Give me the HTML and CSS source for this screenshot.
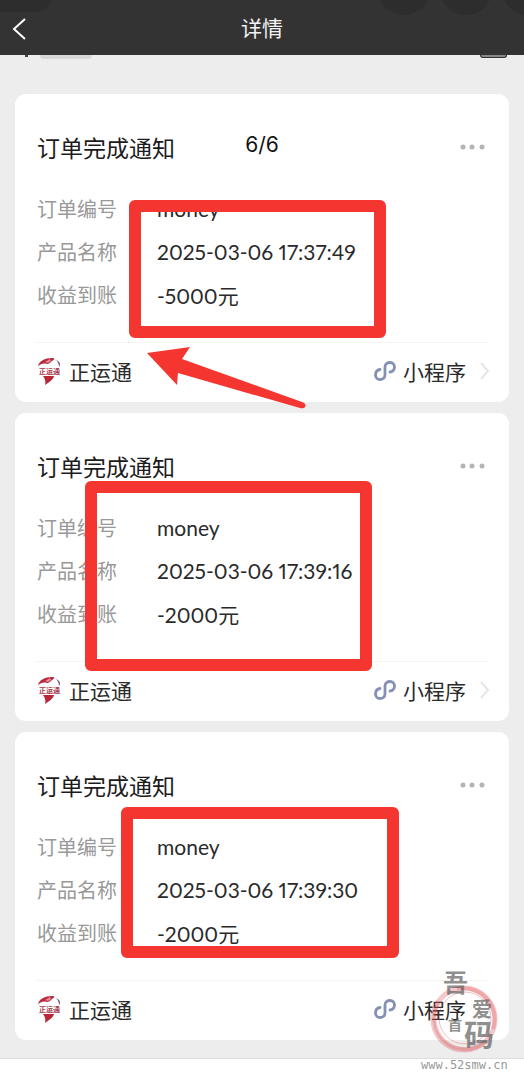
FILE: index.html
```
<!DOCTYPE html>
<html lang="zh-CN">
<head>
  <meta charset="UTF-8" />
  <meta name="viewport" content="width=device-width, initial-scale=1.0"/>
  <title>详情</title>
  <link rel="stylesheet" href="styles.css">
</head>
<body>

  <!-- shared icons -->
  <svg class="sprite" aria-hidden="true">
    <symbol id="logo" viewBox="0 0 24 28">
      <path d="M1 9C2 4 8 1 15 1c3 0 3 1 0 3-2 2-3 3-5 3-4-1-6 0-9 2z" fill="#b8293f"/>
      <path d="M8 5l5-3 1 2-3 2z" fill="#e58a92"/>
      <path d="M19 3c4 2 5 4 3 7 0-3-1-5-3-7z" fill="#6d5470"/>
      <path d="M6 19h11c-1 4-5 6-9 9 1-4 0-6-2-9z" fill="#bb2538"/>
      <text x="2" y="17" class="logo-text">正运通</text>
    </symbol>
    <symbol id="mini" viewBox="0 0 22 22">
      <path d="M6 9.500C3 10 1.500 12.500 1.500 15c0 2.500 2 4.500 4.500 4.500s5-1.500 5-4.500V7c0-3 2.500-4.500 5-4.500S20.500 4.500 20.500 7c0 2.500-1.500 4.500-4.500 5" fill="none" stroke="#8490b4" stroke-width="2.800" stroke-linecap="round"/>
    </symbol>
    <symbol id="arrow-right" viewBox="0 0 10 18">
      <path d="M1 1l7 8-7 8" fill="none" stroke="#e6e6e6" stroke-width="2"/>
    </symbol>
    <symbol id="dots" viewBox="0 0 26 6">
      <g fill="#b4b4b4"><circle cx="3" cy="3" r="2.500"/><circle cx="12" cy="3" r="2.500"/><circle cx="22" cy="3" r="2.500"/></g>
    </symbol>
  </svg>

  <header class="navbar">
    <span class="status-pill"></span>
    <span class="status-dots"><i></i><i></i><i></i></span>
    <button class="back" aria-label="返回">
      <svg width="14" height="22" viewBox="0 0 14 22"><path d="M13 1L2 11l11 10" fill="none" stroke="#fff" stroke-width="2"/></svg>
    </button>
    <h1>详情</h1>
  </header>

  <main class="list">
    <span class="peek peek-dot"></span>
    <span class="peek peek-name"></span>
    <span class="peek peek-box"></span>

    <article class="card">
      <div class="card-head">
        <h2>订单完成通知</h2>
        <button class="more" aria-label="更多"><svg width="26" height="6"><use href="#dots"/></svg></button>
      </div>
      <dl>
        <div class="row"><dt>订单编号</dt><dd>money</dd></div>
        <div class="row"><dt>产品名称</dt><dd>2025-03-06 17:37:49</dd></div>
        <div class="row"><dt>收益到账</dt><dd>-5000元</dd></div>
      </dl>
      <a class="card-foot" href="#">
        <svg width="24" height="28"><use href="#logo"/></svg>
        <span class="brand">正运通</span>
        <svg width="22" height="22"><use href="#mini"/></svg>
        <span class="mini-name">小程序</span>
        <svg width="10" height="18"><use href="#arrow-right"/></svg>
      </a>
      <span class="counter">6/6</span>
      <span class="mark mark-1"></span>
      <svg class="pointer" width="160" height="64" viewBox="0 0 160 64"><path d="M0 6L43 0l-8 12 120 43q5 2 3 5-1 2-5 1L31 26l-1 12z" fill="#f43530"/></svg>
    </article>

    <article class="card">
      <div class="card-head">
        <h2>订单完成通知</h2>
        <button class="more" aria-label="更多"><svg width="26" height="6"><use href="#dots"/></svg></button>
      </div>
      <dl>
        <div class="row"><dt>订单编号</dt><dd>money</dd></div>
        <div class="row"><dt>产品名称</dt><dd>2025-03-06 17:39:16</dd></div>
        <div class="row"><dt>收益到账</dt><dd>-2000元</dd></div>
      </dl>
      <a class="card-foot" href="#">
        <svg width="24" height="28"><use href="#logo"/></svg>
        <span class="brand">正运通</span>
        <svg width="22" height="22"><use href="#mini"/></svg>
        <span class="mini-name">小程序</span>
        <svg width="10" height="18"><use href="#arrow-right"/></svg>
      </a>
      <span class="mark mark-2"></span>
    </article>

    <article class="card">
      <div class="card-head">
        <h2>订单完成通知</h2>
        <button class="more" aria-label="更多"><svg width="26" height="6"><use href="#dots"/></svg></button>
      </div>
      <dl>
        <div class="row"><dt>订单编号</dt><dd>money</dd></div>
        <div class="row"><dt>产品名称</dt><dd>2025-03-06 17:39:30</dd></div>
        <div class="row"><dt>收益到账</dt><dd>-2000元</dd></div>
      </dl>
      <a class="card-foot" href="#">
        <svg width="24" height="28"><use href="#logo"/></svg>
        <span class="brand">正运通</span>
        <svg width="22" height="22"><use href="#mini"/></svg>
        <span class="mini-name">小程序</span>
        <svg class="hidden" width="10" height="18"><use href="#arrow-right"/></svg>
      </a>
      <span class="mark mark-3"></span>
    </article>

    <!-- watermark -->
    <div class="watermark">
      <svg width="88" height="90" viewBox="0 0 88 90">
        <g fill="none" stroke="#d9474a">
          <circle cx="43" cy="51" r="31" stroke-width="5" opacity=".3"/>
          <path d="M36 21a31 31 0 0 1 36 40M18 34a31 31 0 0 0 45 41" stroke-width="4" opacity=".25"/>
          <circle cx="44" cy="50" r="26" stroke-width="1" opacity=".35"/>
        </g>
        <g class="seal-text">
          <text x="22" y="24" font-size="25">吾</text>
          <text x="27" y="62" font-size="14">首</text>
          <text x="51" y="49" font-size="20">爱</text>
          <text x="43" y="78" font-size="30">码</text>
        </g>
      </svg>
      <span>www.52smw.cn</span>
    </div>
  </main>

  <footer class="bottom"></footer>

</body>
</html>
```
FILE: styles.css
```
* { margin: 0; padding: 0; box-sizing: border-box; }
body {
  min-height: 100vh;
  display: flex;
  flex-direction: column;
  background: #ededed;
  color: #2a2a2a;
  font-family: "Noto Sans CJK SC", sans-serif;
}

button {
  border: none;
  background: none;
  cursor: pointer;
}

svg {
  display: block;
  flex: none;
}

.sprite {
  position: absolute;
  width: 0;
  height: 0;
}

.logo-text {
  font-size: 7px;
  font-weight: 700;
  fill: #a5384a;
}

/* top bar */
.navbar {
  position: relative;
  height: 55px;
  display: flex;
  align-items: center;
  justify-content: center;
  padding-bottom: 2px;
  background: #333;
  color: #f4f4f4;
  overflow: hidden;
}

.navbar h1 {
  position: relative;
  font-size: 21px;
  line-height: 30px;
  font-weight: 400;
}

.back {
  position: absolute;
  left: 12px;
  top: 18px;
}

.status-pill {
  position: absolute;
  left: -20px;
  top: -20px;
  width: 72px;
  height: 32px;
  border-radius: 16px;
  background: #2d2d2d;
}

.status-dots {
  position: absolute;
  right: -30px;
  top: -37px;
  display: flex;
  gap: 10px;
}

.status-dots i {
  width: 52px;
  height: 52px;
  border-radius: 50%;
  background: #2d2d2d;
}

/* message list */
.list {
  position: relative;
  display: flex;
  flex-direction: column;
  gap: 11px;
  padding: 39px 15px 18px;
}

.peek {
  position: absolute;
  top: 0;
}

.peek-dot {
  left: 25px;
  width: 3px;
  height: 2px;
  background: #444;
}

.peek-name {
  left: 40px;
  width: 52px;
  height: 4px;
  border-radius: 0 0 8px 8px;
  background: #d8d8d8;
}

.peek-box {
  right: 17px;
  width: 27px;
  height: 3px;
  border: 1px solid #333;
  border-top: none;
  border-radius: 0 0 3px 3px;
  background: #888;
}

.card {
  position: relative;
  padding: 38px 22px 4px;
  border-radius: 11px;
  background: #fff;
}

.card-head {
  display: flex;
  align-items: center;
  justify-content: space-between;
  margin-bottom: 25px;
}

.card-head h2 {
  font-size: 23px;
  line-height: 30px;
  font-weight: 400;
  color: #1c1c1c;
}

.more {
  margin-right: 1px;
}

.row {
  display: flex;
  align-items: center;
  height: 43px;
}

.row dt {
  width: 120px;
  font-size: 20px;
  color: #999;
}

.row dd {
  font-family: Lato, "Noto Sans CJK SC", sans-serif;
  font-size: 21px;
  font-variant-numeric: proportional-nums;
}

.card-foot {
  display: flex;
  align-items: center;
  height: 56px;
  margin-top: 26px;
  border-top: 1px solid #f3f3f3;
  font-size: 21px;
  line-height: 30px;
  color: inherit;
  text-decoration: none;
}

.brand {
  flex: 1;
  margin-left: 8px;
}

.mini-name {
  margin: 0 14px 0 7px;
}

.card-foot svg:last-child {
  margin-right: -3px;
}

.hidden {
  visibility: hidden;
}

/* page counter and red marks drawn over the cards */
.counter {
  position: absolute;
  top: 36px;
  left: 0;
  right: 0;
  font-family: Inter, sans-serif;
  font-size: 21px;
  line-height: 30px;
  text-align: center;
  color: #111;
  pointer-events: none;
}

.mark {
  position: absolute;
  border: 12px solid #f43530;
  border-radius: 6px;
  pointer-events: none;
}

.mark-1 {
  left: 114px;
  top: 106px;
  width: 257px;
  height: 138px;
}

.mark-2 {
  left: 70px;
  top: 68px;
  width: 287px;
  height: 190px;
}

.mark-3 {
  left: 106px;
  top: 75px;
  width: 278px;
  height: 151px;
}

.pointer {
  position: absolute;
  left: 132px;
  top: 253px;
  z-index: 1;
  pointer-events: none;
}

.watermark {
  position: absolute;
  right: 15px;
  bottom: -14px;
  width: 88px;
  color: #999;
  font-family: "DejaVu Sans Mono", monospace;
  font-size: 12px;
  line-height: 14px;
  pointer-events: none;
}

.watermark svg {
  overflow: visible;
}

.seal-text {
  font-family: "Noto Sans CJK SC", sans-serif;
  font-weight: 700;
  fill: #555;
  opacity: .65;
}

.bottom {
  flex: 1;
  border-top: 1px solid #dedede;
  background: #fff;
}
```
